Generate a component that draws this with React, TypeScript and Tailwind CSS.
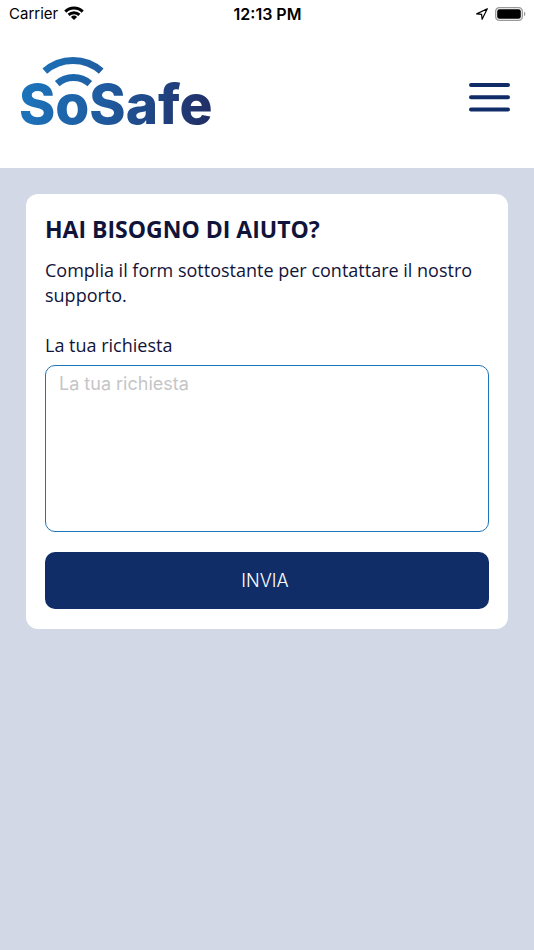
function StatusBar() {
  return (
    <div className="grid h-7 grid-cols-3 items-center pr-2 pl-[9px] font-['Inter',sans-serif] text-[15px] leading-5 text-black">
      <div className="flex items-center gap-[6px]">
        <span>Carrier</span>
        <svg viewBox="0 0 20 14" className="mb-[2px] h-[14px] w-5" fill="none" stroke="black" strokeWidth="3" aria-hidden="true">
          <path d="M1.3 5.6 A12.4 12.4 0 0 1 18.7 5.6" />
          <path d="M4.6 8.9 A7.8 7.8 0 0 1 15.4 8.9" />
          <path d="M10 14 L6.9 10.9 A4.4 4.4 0 0 1 13.1 10.9 Z" fill="black" stroke="none" />
        </svg>
      </div>
      <span className="text-center text-base leading-5 font-semibold">12:13 PM</span>
      <div className="flex items-center justify-end gap-[7px]">
        <svg viewBox="0 0 12 12" className="h-3 w-3" fill="none" stroke="black" strokeWidth="1.2" strokeLinejoin="round" aria-hidden="true">
          <path d="M11.3 0.7 L0.7 5.9 L5.6 6.4 L6.1 11.3 Z" />
        </svg>
        <svg viewBox="0 0 31 14" className="h-[14px] w-[31px]" aria-hidden="true">
          <rect x="0.7" y="0.7" width="26.6" height="12.6" rx="3.6" fill="none" stroke="#999999" strokeWidth="1.3" />
          <rect x="2.2" y="2.2" width="23.6" height="9.6" rx="2.2" fill="black" />
          <path d="M29 4.8 C30.8 5.4 30.8 8.6 29 9.2 Z" fill="#999999" />
        </svg>
      </div>
    </div>
  );
}

function Logo() {
  return (
    <svg viewBox="0 0 196 72" className="h-[72px] w-[196px] overflow-visible" role="img" aria-label="SoSafe">
      <defs>
        <linearGradient id="brand" gradientUnits="userSpaceOnUse" x1="0" y1="20" x2="194" y2="60">
          <stop offset="0" stopColor="#1c76bd" />
          <stop offset="0.45" stopColor="#1f5a9e" />
          <stop offset="1" stopColor="#212c63" />
        </linearGradient>
      </defs>
      <g fill="none" stroke="url(#brand)" strokeWidth="7">
        <path d="M24.8 14.2 A42.5 42.5 0 0 1 81.2 14.2" />
        <path d="M37.2 26.6 A25 25 0 0 1 69.8 26.6" />
      </g>
      <text x="-1" y="67" fontSize="55" fontWeight="800" fill="url(#brand)" className="font-['Inter',sans-serif]">
        SoSafe
      </text>
    </svg>
  );
}

function Header() {
  return (
    <header className="flex h-[140px] items-center justify-between pr-6 pl-5">
      <a href="#" className="mb-[11px]">
        <Logo />
      </a>
      <button type="button" aria-label="Menu" className="mb-[2px]">
        <svg viewBox="0 0 41 30" className="h-[30px] w-[41px]" stroke="#0f2c68" strokeWidth="4" strokeLinecap="round" aria-hidden="true">
          <path d="M2 3 H39 M2 15.2 H39 M2 27.4 H39" />
        </svg>
      </button>
    </header>
  );
}

export default function App() {
  return (
    <div className="flex min-h-screen flex-col bg-white font-['Open_Sans',sans-serif] text-[#11143a]">
      <StatusBar />
      <Header />

      <main className="flex-1 bg-[#d3d8e6] p-[26px]">
        <form className="flex flex-col rounded-xl bg-white px-[19px] pt-[19px] pb-5">
          <h1 className="text-[23px] leading-8 font-bold">HAI BISOGNO DI AIUTO?</h1>
          <p className="mt-[13px] text-lg leading-[25px]">
            Complia il form sottostante per contattare il nostro supporto.
          </p>

          <label htmlFor="request" className="mt-[25px] text-lg leading-[25px]">
            La tua richiesta
          </label>
          <textarea
            id="request"
            placeholder="La tua richiesta"
            className="mt-[7px] h-[167px] resize-none rounded-[10px] border border-[#1c75bb] px-[13px] py-[6px] font-['Inter',sans-serif] text-lg leading-6 outline-none placeholder:text-[#c5c5c7]"
          />

          <button
            type="button"
            className="mt-5 h-[57px] rounded-[10px] bg-[#112d68] pr-1 font-['Inter',sans-serif] text-lg font-light text-white"
          >
            INVIA
          </button>
        </form>
      </main>
    </div>
  );
}
